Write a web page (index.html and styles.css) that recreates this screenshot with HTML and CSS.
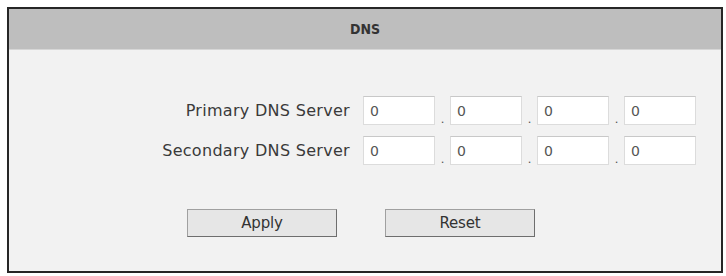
FILE: index.html
```html
<!DOCTYPE html>
<html lang="en">
<head>
    <meta charset="UTF-8">
    <title>DNS</title>
    <link rel="stylesheet" href="styles.css">
</head>
<body>

    <div class="panel">
        <div class="panel-header">DNS</div>
        <div class="panel-body">
            <div class="dns-row">
                <label class="dns-label">Primary DNS Server</label>
                <div class="ip-group">
                    <input class="ip-field" type="text" value="0"><span class="ip-dot">.</span>
                    <input class="ip-field" type="text" value="0"><span class="ip-dot">.</span>
                    <input class="ip-field" type="text" value="0"><span class="ip-dot">.</span>
                    <input class="ip-field" type="text" value="0">
                </div>
            </div>
            <div class="dns-row">
                <label class="dns-label">Secondary DNS Server</label>
                <div class="ip-group">
                    <input class="ip-field" type="text" value="0"><span class="ip-dot">.</span>
                    <input class="ip-field" type="text" value="0"><span class="ip-dot">.</span>
                    <input class="ip-field" type="text" value="0"><span class="ip-dot">.</span>
                    <input class="ip-field" type="text" value="0">
                </div>
            </div>
            <div class="button-row">
                <button class="btn">Apply</button>
                <button class="btn">Reset</button>
            </div>
        </div>
    </div>

</body>
</html>
```

FILE: styles.css
```css
body {
    margin: 0;
    background-color: #ffffff;
    font-family: 'Liberation Sans', Arial, sans-serif;
}

.panel {
    margin: 7px 0 0 7px;
    width: 712px;
    height: 262px;
    border: 2px solid #262626;
    background-color: #f2f2f2;
}

.panel-header {
    height: 40px;
    line-height: 40px;
    background-color: #bebebe;
    border-bottom: 1px solid #d6d6d6;
    text-align: center;
    font-family: 'DejaVu Sans Condensed', 'Liberation Sans', sans-serif;
    font-weight: bold;
    font-size: 14px;
    color: #333;
}

.panel-body {
    padding: 46px 0 0 141px;
}

.dns-row {
    display: flex;
    align-items: center;
    margin-bottom: 11px;
}

.dns-label {
    width: 200px;
    padding-right: 13px;
    text-align: right;
    font-family: 'DejaVu Sans', sans-serif;
    font-size: 16px;
    letter-spacing: 0.3px;
    color: #3a3a3a;
}

.ip-group {
    display: flex;
    align-items: flex-end;
}

.ip-field {
    width: 72px;
    height: 29px;
    box-sizing: border-box;
    margin: 0;
    padding: 0 0 0 6px;
    border: 1px solid #dcdcdc;
    border-top-color: #c8c8c8;
    background-color: #fff;
    font-family: 'DejaVu Sans', sans-serif;
    font-size: 14px;
    color: #555;
}

.ip-dot {
    width: 15px;
    text-align: center;
    font-size: 13px;
    color: #555;
    line-height: 12px;
}

.button-row {
    display: flex;
    gap: 48px;
    margin: 44px 0 0 37px;
}

.btn {
    width: 150px;
    height: 28px;
    margin: 0;
    padding: 0;
    background-color: #e6e6e6;
    border: 1px solid #a0a0a0;
    border-right-color: #6e6e6e;
    border-bottom-color: #6e6e6e;
    font-family: 'DejaVu Sans', sans-serif;
    font-size: 15px;
    letter-spacing: -0.2px;
    color: #333;
}
```
